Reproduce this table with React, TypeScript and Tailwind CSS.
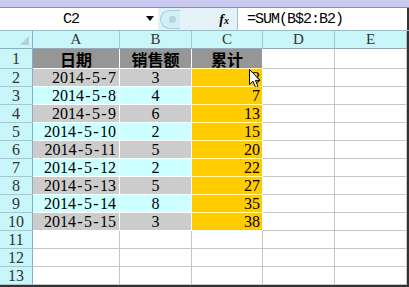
import React from "react";

const rows = [
  { d: "2014-5-7", n: "3", s: "3" },
  { d: "2014-5-8", n: "4", s: "7" },
  { d: "2014-5-9", n: "6", s: "13" },
  { d: "2014-5-10", n: "2", s: "15" },
  { d: "2014-5-11", n: "5", s: "20" },
  { d: "2014-5-12", n: "2", s: "22" },
  { d: "2014-5-13", n: "5", s: "27" },
  { d: "2014-5-14", n: "8", s: "35" },
  { d: "2014-5-15", n: "3", s: "38" },
];

const serif = { fontFamily: '"Liberation Serif", serif' };
const mono = { fontFamily: '"Liberation Mono", monospace' };
const cjk = { fontFamily: '"Noto Sans CJK SC", sans-serif' };

// dates: serif digits are 8px at 16px, widen the dashes to match
const DateText = ({ t }: { t: string }) => (
  <span className="inline-flex">
    {t.split("-").map((part, i) => (
      <React.Fragment key={i}>
        {i > 0 && <span className="inline-block w-[8px] text-center">-</span>}
        <span>{part}</span>
      </React.Fragment>
    ))}
  </span>
);

const Cursor = () => (
  <svg width="13" height="20" viewBox="0 0 13 20" className="absolute left-[57px] top-0">
    <path d="M0.5 0.5 L0.5 15.5 L4 12.2 L6.6 18.6 L9 17.6 L6.4 11.4 L11 11.4 Z" fill="white" stroke="black" strokeWidth="1" />
  </svg>
);

const RowHead = ({ n, h = "h-[18px]" }: { n: number; h?: string }) => (
  <div className={`${h} w-[33px] bg-[#c9f6f9] border-r border-r-[#86aec6] border-b border-b-[#a9c6d6] flex items-center justify-center text-[16px] leading-none text-[#333]`}>
    {n}
  </div>
);

const Empty = ({ w, h = "h-[18px]" }: { w: string; h?: string }) => (
  <div className={`${h} ${w} bg-white border-r border-b border-[#c6c6c6]`} />
);

export default function App() {
  return (
    <div className="w-[409px] h-[287px] overflow-hidden bg-white relative" style={serif}>
      {/* window top strip */}
      <div className="h-[8px] bg-[#c9c9ee] border-b border-[#8a8ab8]" />

      {/* formula bar */}
      <div className="h-[23px] flex border-b border-[#9bb8c8]">
        <div className="w-[158px] bg-white flex items-center relative">
          <span className="w-full text-center text-[15px] leading-none tracking-[-1px] pr-[16px]" style={mono}>C2</span>
          <span className="absolute right-[4px] top-[8px] w-0 h-0 border-l-[4px] border-r-[4px] border-t-[5px] border-l-transparent border-r-transparent border-t-black" />
        </div>
        <div className="w-[79px] bg-[#e4f2f8] flex items-center relative">
          <div className="ml-[2px] w-[20px] h-[19px] rounded-l-full border border-r-0 border-[#9fcfe0] bg-[#d4eef6] flex items-center justify-center">
            <div className="w-[7px] h-[7px] rounded-full bg-[#b8d4de] ml-[3px]" />
          </div>
          <span className="ml-auto mr-[8px] text-[14px] italic font-bold">
            f<span className="text-[10px]">x</span>
          </span>
        </div>
        <div className="flex-1 bg-white border-l border-[#a8c0cc] flex items-center pl-[9px] text-[15px] leading-none tracking-[-1px]" style={mono}>
          =SUM(B$2:B2)
        </div>
        <div className="w-[2px] bg-[#333]" />
      </div>

      {/* sheet */}
      <div className="flex">
        <div className="flex flex-col">
          {/* column headers */}
          <div className="flex">
            <div className="h-[18px] w-[33px] bg-[#c9f6f9] border-r border-r-[#86aec6] border-b border-b-[#86aec6] relative">
              <span className="absolute right-[3px] bottom-[3px] w-0 h-0" style={{ borderBottom: "9px solid #b9cfd6", borderLeft: "9px solid transparent" }} />
            </div>
            {[["A", "w-[87px]"], ["B", "w-[72px]"], ["C", "w-[71px]"], ["D", "w-[72px]"], ["E", "w-[72px]"]].map(([l, w]) => (
              <div key={l} className={`h-[18px] ${w} bg-[#c9f6f9] border-r border-r-[#a9c6d6] border-b border-b-[#86aec6] flex items-center justify-center text-[15px] leading-none text-[#333]`}>
                {l}
              </div>
            ))}
          </div>

          {/* row 1 */}
          <div className="flex">
            <RowHead n={1} h="h-[20px]" />
            <div className="h-[20px] w-[87px] bg-[#969696] border-r border-b border-white flex items-center justify-center text-[16px] leading-none font-bold" style={cjk}>日期</div>
            <div className="h-[20px] w-[72px] bg-[#969696] border-r border-b border-white flex items-center justify-center text-[16px] leading-none font-bold" style={cjk}>销售额</div>
            <div className="h-[20px] w-[71px] bg-[#969696] border-r border-b border-white flex items-center justify-center text-[16px] leading-none font-bold" style={cjk}>累计</div>
            <Empty w="w-[72px]" h="h-[20px]" />
            <Empty w="w-[72px]" h="h-[20px]" />
          </div>

          {rows.map((r, i) => {
            const bg = i % 2 === 0 ? "bg-[#cccccc]" : "bg-[#ccffff]";
            return (
              <div key={r.d} className="flex">
                <RowHead n={i + 2} />
                <div className={`h-[18px] w-[87px] ${bg} border-r border-b border-white flex items-center justify-end pr-[3px] text-[16px] leading-none`}><DateText t={r.d} /></div>
                <div className={`h-[18px] w-[72px] ${bg} border-r border-b border-white flex items-center justify-center text-[16px] leading-none`}>{r.n}</div>
                <div className="h-[18px] w-[71px] bg-[#ffcc00] border-r border-b border-white flex items-center justify-end pr-[2px] text-[16px] leading-none relative">
                  {r.s}
                  {i === 0 && <Cursor />}
                </div>
                <Empty w="w-[72px]" />
                <Empty w="w-[72px]" />
              </div>
            );
          })}

          {[11, 12, 13].map((n) => (
            <div key={n} className="flex">
              <RowHead n={n} />
              <Empty w="w-[87px]" />
              <Empty w="w-[72px]" />
              <Empty w="w-[71px]" />
              <Empty w="w-[72px]" />
              <Empty w="w-[72px]" />
            </div>
          ))}
        </div>
        <div className="w-[2px] bg-[#333] ml-auto" />
      </div>
      <div className="absolute left-0 bottom-0 w-full h-[2px] bg-[#333]" />
    </div>
  );
}
